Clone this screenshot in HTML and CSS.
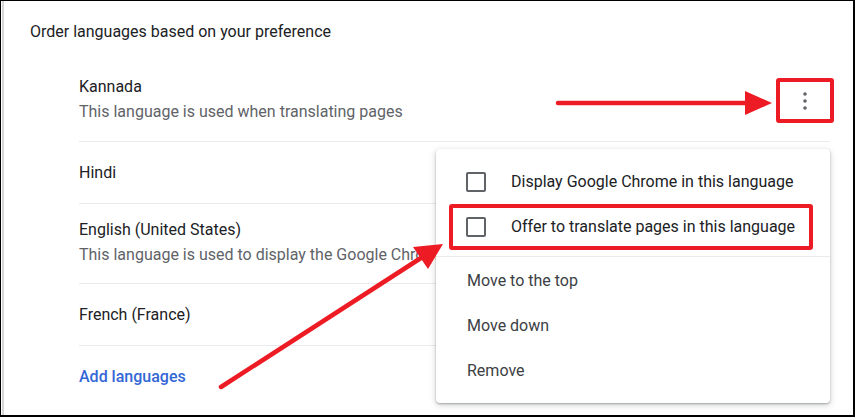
FILE: index.html
```html
<!DOCTYPE html>
<html lang="en">
<head>
  <meta charset="UTF-8">
  <meta name="viewport" content="width=device-width, initial-scale=1.0">
  <title>Languages</title>
  <link rel="stylesheet" href="styles.css">
</head>
<body>
  <div class="frame">
    <div class="card">
      <div class="section-title">Order languages based on your preference</div>
      <div class="lang-list">
        <div class="lang-row two first">
          <div class="lang-info">
            <div class="lang-name">Kannada</div>
            <div class="lang-sub">This language is used when translating pages</div>
          </div>
          <button class="more-btn" type="button">
            <svg width="20" height="20" viewBox="0 0 20 20"><circle cx="10" cy="3" r="1.8"/><circle cx="10" cy="10" r="1.8"/><circle cx="10" cy="17" r="1.8"/></svg>
          </button>
        </div>
        <div class="lang-row">
          <div class="lang-info">
            <div class="lang-name">Hindi</div>
          </div>
          <button class="more-btn" type="button">
            <svg width="20" height="20" viewBox="0 0 20 20"><circle cx="10" cy="3" r="1.8"/><circle cx="10" cy="10" r="1.8"/><circle cx="10" cy="17" r="1.8"/></svg>
          </button>
        </div>
        <div class="lang-row two">
          <div class="lang-info">
            <div class="lang-name">English (United States)</div>
            <div class="lang-sub">This language is used to display the Google Chrome UI</div>
          </div>
          <button class="more-btn" type="button">
            <svg width="20" height="20" viewBox="0 0 20 20"><circle cx="10" cy="3" r="1.8"/><circle cx="10" cy="10" r="1.8"/><circle cx="10" cy="17" r="1.8"/></svg>
          </button>
        </div>
        <div class="lang-row">
          <div class="lang-info">
            <div class="lang-name">French (France)</div>
          </div>
          <button class="more-btn" type="button">
            <svg width="20" height="20" viewBox="0 0 20 20"><circle cx="10" cy="3" r="1.8"/><circle cx="10" cy="10" r="1.8"/><circle cx="10" cy="17" r="1.8"/></svg>
          </button>
        </div>
        <div class="lang-row add-row">
          <a href="#" class="add-link">Add languages</a>
        </div>
      </div>
    </div>

    <div class="action-menu">
      <label class="menu-item check-item">
        <span class="checkbox"></span>
        <span>Display Google Chrome in this language</span>
      </label>
      <label class="menu-item check-item">
        <span class="checkbox"></span>
        <span>Offer to translate pages in this language</span>
      </label>
      <div class="menu-sep"></div>
      <div class="menu-item">Move to the top</div>
      <div class="menu-item">Move down</div>
      <div class="menu-item">Remove</div>
    </div>

    <!-- annotations -->
    <div class="callout callout-more"></div>
    <div class="callout callout-offer"></div>
    <svg class="arrows" width="855" height="417" viewBox="0 0 855 417">
      <line x1="558" y1="103" x2="750" y2="103" />
      <polygon points="745,91 772,103 745,115" />
      <line x1="221" y1="387" x2="424" y2="256" />
      <polygon points="443,244 428,269 413,247" />
    </svg>
  </div>
</body>
</html>
```

FILE: styles.css
```css
body {
  margin: 0;
  padding: 0;
  background-color: #ffffff;
  font-family: Roboto, "Liberation Sans", Arial, sans-serif;
}
.frame {
  position: relative;
  width: 855px;
  height: 417px;
  box-sizing: border-box;
  border-top: 1px solid #000;
  border-left: 1px solid #000;
  border-right: 2px solid #000;
  border-bottom: 2px solid #000;
  overflow: hidden;
}
.card {
  margin-left: 1px;
  height: 100%;
  box-sizing: border-box;
  border-left: 2px solid #d6d6d6;
  padding: 21px 24px 0 26px;
}
.section-title {
  font-size: 16px;
  line-height: 20px;
  color: #202124;
  margin-bottom: 19px;
}
.lang-list {
  margin-left: 49px;
}
.lang-row {
  display: flex;
  align-items: center;
  height: 62px;
  box-sizing: border-box;
  border-top: 1px solid #e8eaed;
  padding-right: 6px;
}
.lang-row.first {
  border-top: none;
}
.lang-row.two {
  height: 80px;
  align-items: flex-start;
  padding-top: 16px;
}
.lang-row.two .more-btn {
  margin-top: 6px;
}
.lang-info {
  flex: 1;
}
.lang-name {
  font-size: 16px;
  line-height: 20px;
  color: #202124;
}
.lang-sub {
  font-size: 16px;
  line-height: 20px;
  margin-top: 5px;
  color: #5f6368;
  white-space: nowrap;
}
.more-btn {
  width: 36px;
  height: 36px;
  border: none;
  background: none;
  padding: 0;
  display: flex;
  align-items: center;
  justify-content: center;
  fill: #5f6368;
}
.add-row {
  border-top: 1px solid #e8eaed;
}
.add-link {
  font-size: 16px;
  font-weight: 500;
  color: #3367d6;
  text-decoration: none;
}

/* dropdown menu */
.action-menu {
  position: absolute;
  left: 435px;
  top: 148px;
  width: 394px;
  padding: 10px 0;
  background-color: #ffffff;
  border-radius: 4px;
  box-shadow: 0 2px 6px rgba(60, 64, 67, 0.25), 0 1px 2px rgba(60, 64, 67, 0.35);
}
.menu-item {
  display: flex;
  align-items: center;
  height: 45px;
  padding-left: 31px;
  font-size: 16px;
  color: #3c4043;
}
.check-item {
  padding-left: 30px;
  color: #202124;
}
.checkbox {
  width: 16px;
  height: 16px;
  border: 2px solid #5f6368;
  border-radius: 2px;
  margin-right: 25px;
}
.menu-sep {
  height: 1px;
  background-color: #e8eaed;
  margin: 7px 0 1px;
}

/* red annotations */
.callout {
  position: absolute;
  border: 4px solid #ed1c24;
  border-radius: 3px;
  box-sizing: border-box;
}
.callout-more {
  left: 775px;
  top: 77px;
  width: 58px;
  height: 45px;
}
.callout-offer {
  left: 448px;
  top: 203px;
  width: 364px;
  height: 46px;
}
.arrows {
  position: absolute;
  left: -1px;
  top: -1px;
}
.arrows line {
  stroke: #ed1c24;
  stroke-width: 4.5;
  stroke-linecap: round;
}
.arrows polygon {
  fill: #ed1c24;
}
```
